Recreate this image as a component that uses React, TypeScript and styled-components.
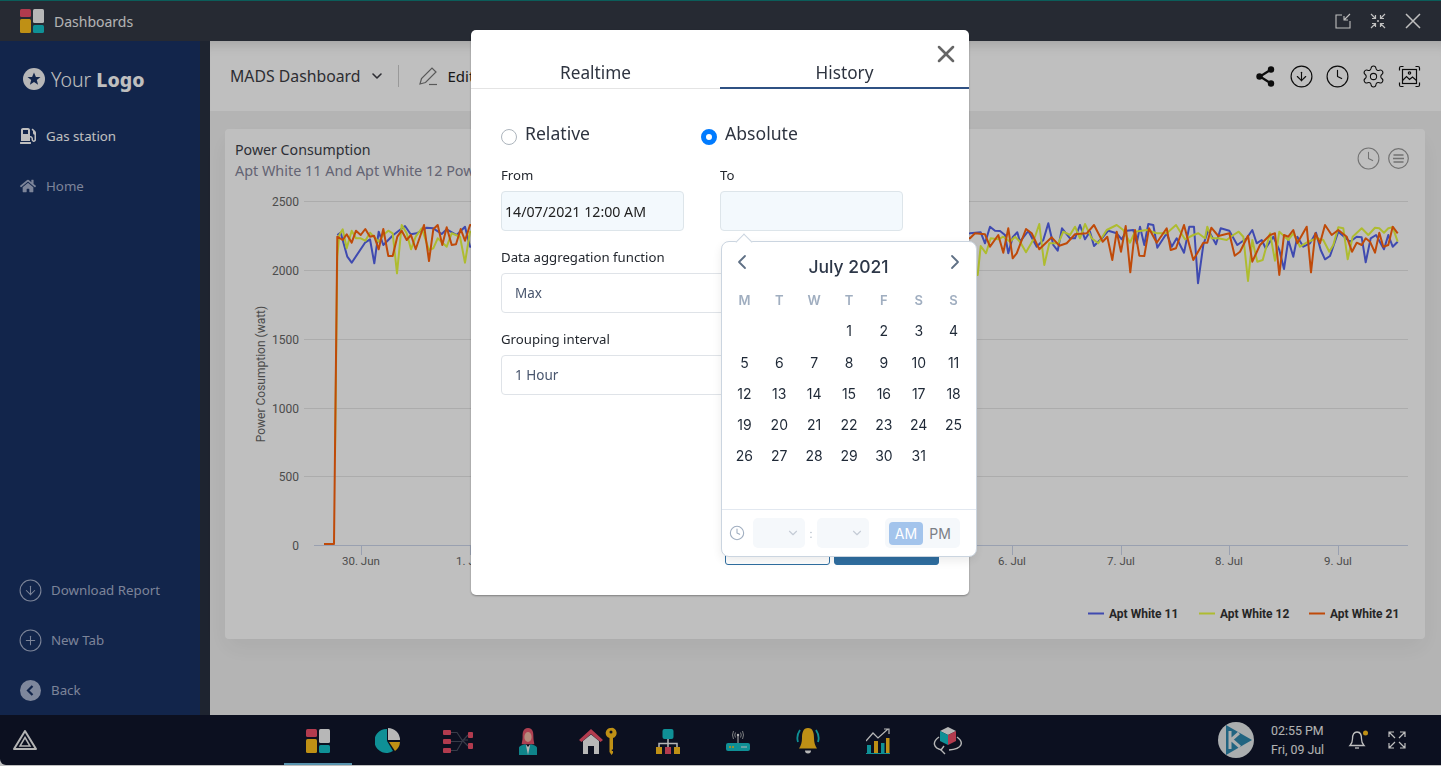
import React from 'react';
import styled, { createGlobalStyle } from 'styled-components';
import { ChevronDown, ChevronLeft, ChevronRight, CircleArrowDown, CirclePlus, Clock, Settings, X } from 'lucide-react';
import { FaGasPump, FaHome } from 'react-icons/fa';

const GlobalStyle = createGlobalStyle`
	html, body { margin: 0; padding: 0; background: #fff; }
	body { font-family: "Noto Sans", "Open Sans", sans-serif; overflow: hidden; }
	* { box-sizing: border-box; }
`;

const Shell = styled.div`
	height: 765px;
	display: flex;
	flex-direction: column;
	overflow: hidden;
`;
const TitleBar = styled.header`
	height: 41px;
	flex: none;
	display: flex;
	align-items: center;
	padding: 0 20px 0 20px;
	background: #333844;
	border-top: 1px solid #0f7d78;
	position: relative;
	z-index: 2;
`;
const TitleText = styled.span`
	margin-left: 10px;
	font-size: 14px;
	color: #fff;
	opacity: 0.92;
`;
const TitleActions = styled.div`
	margin-left: auto;
	display: flex;
	align-items: center;
	gap: 19px;
	color: #fff;
`;
const Middle = styled.div`
	flex: 1;
	display: flex;
	min-height: 0;
`;
const Sidebar = styled.aside`
	width: 210px;
	flex: none;
	display: flex;
	flex-direction: column;
	background: #193264;
	border-right: 10px solid #293040;
	padding: 0 0 15px 20px;
`;
const Logo = styled.div`
	display: flex;
	align-items: center;
	gap: 6px;
	margin: 27px 0 0 3px;
	height: 22px;
	font-size: 19.5px;
	color: #fff;
	font-weight: 300;
	b { font-weight: 800; }
`;
const NavItem = styled.div<{ $dim?: boolean; $wide?: boolean }>`
	display: flex;
	align-items: center;
	height: 20px;
	gap: 10px;
	font-size: 13.3px;
	color: ${(p) => (p.$dim ? '#a6b1cc' : '#ffffff')};
	svg { flex: none; }
	${(p) => p.$wide && 'svg { margin-left: -2px; margin-right: -2px; } gap: 10px;'}
`;
const TopNav = styled.nav`
	display: flex;
	flex-direction: column;
	gap: 30px;
	margin-top: 36px;
`;
const BottomNav = styled.nav`
	margin-top: auto;
	display: flex;
	flex-direction: column;
	gap: 30px;
`;
const Content = styled.main`
	flex: 1;
	min-width: 0;
	background: #f1f1f1;
	display: flex;
	flex-direction: column;
`;
const Toolbar = styled.div`
	height: 70px;
	flex: none;
	display: flex;
	align-items: center;
	background: #fff;
	padding: 0 19px 0 20px;
	box-shadow: inset 0 14px 12px -10px rgba(0, 0, 0, 0.14);
`;
const DashName = styled.span`
	font-size: 15.8px;
	color: #3c3c44;
	display: flex;
	align-items: center;
	gap: 8px;
`;
const Divider = styled.span`
	width: 1px;
	height: 22px;
	background: #ccc;
	margin: 0 20px 0 13px;
`;
const EditLabel = styled.span`
	margin-left: 9px;
	font-size: 15px;
	color: #222;
`;
const ToolActions = styled.div`
	margin-left: auto;
	display: flex;
	align-items: center;
	gap: 11px;
	color: #111;
`;
const Card = styled.section`
	margin: 18px 16px 0 15px;
	height: 510px;
	background: #fff;
	border-radius: 4px;
	box-shadow: 0 10px 24px rgba(0, 0, 0, 0.05);
`;
const CardHead = styled.div`
	display: flex;
	justify-content: space-between;
	padding: 11px 14px 0 10px;
	height: 61px;
`;
const CardTitle = styled.h2`
	margin: 0;
	font-size: 14.2px;
	line-height: 20px;
	font-weight: 400;
	color: #3d3f4a;
`;
const CardSub = styled.p`
	margin: 1px 0 0;
	font-size: 14.4px;
	line-height: 20px;
	color: #85859a;
`;
const CardActions = styled.div`
	display: flex;
	gap: 5px;
	color: #999;
	padding-top: 6px;
`;
const ChartSvg = styled.svg`
	display: block;
	width: 1200px;
	height: 440px;
	font-family: Roboto, "Liberation Sans", sans-serif;
`;
const Dock = styled.footer`
	height: 50px;
	flex: none;
	display: flex;
	align-items: center;
	background: #10162b;
	border-bottom-left-radius: 6px;
	padding: 0 35px 0 13px;
	position: relative;
`;
const DockApps = styled.div`
	position: absolute;
	left: 283px;
	top: 0;
	height: 50px;
	display: flex;
`;
const DockApp = styled.div<{ $active?: boolean }>`
	width: 70px;
	height: 50px;
	display: flex;
	align-items: center;
	justify-content: center;
	padding-top: 2px;
	position: relative;
	&::after {
		content: '';
		position: absolute;
		left: 1px;
		right: 1px;
		bottom: 0;
		height: 2px;
		background: ${(p) => (p.$active ? '#76c4e8' : 'transparent')};
	}
`;
const DockRight = styled.div`
	margin-left: auto;
	display: flex;
	align-items: center;
	color: #fff;
`;
const DockTime = styled.div`
	margin: 0 18px 0 17px;
	font-size: 12.4px;
	line-height: 19px;
	color: #eee;
	font-family: Roboto, sans-serif;
	width: 58px;
`;
const DockGap = styled.span`
	width: 19px;
`;
const Overlay = styled.div`
	position: fixed;
	inset: 0;
	z-index: 5;
	background: rgba(0, 0, 0, 0.25);
	display: flex;
	justify-content: center;
	padding: 30px 1px 0 0;
`;
const Modal = styled.div`
	width: 498px;
	height: 565px;
	background: #fff;
	border-radius: 5px;
	position: relative;
	display: flex;
	flex-direction: column;
	box-shadow: 0 1px 2px rgba(0, 0, 0, 0.35);
`;
const CloseButton = styled.span`
	position: absolute;
	top: 10px;
	right: 9px;
	color: #666;
	display: flex;
`;
const Tabs = styled.div`
	display: flex;
	height: 59px;
	flex: none;
`;
const Tab = styled.div<{ $active?: boolean }>`
	width: 50%;
	padding-top: 31px;
	text-align: center;
	font-size: 17.2px;
	line-height: 24px;
	color: #2e3440;
	border-bottom: ${(p) => (p.$active ? '2px solid #2f5183' : '1px solid #e4e4e4')};
	height: 59px;
`;
const Form = styled.div`
	flex: 1;
	display: flex;
	flex-direction: column;
	padding: 32px 30px 30px;
`;
const RadioRow = styled.div`
	display: flex;
	height: 24px;
	margin-bottom: 21px;
`;
const RadioOption = styled.label`
	width: 200px;
	display: flex;
	gap: 8px;
	font-size: 17.6px;
	line-height: 24px;
	color: #2e3440;
`;
const RadioDot = styled.span<{ $on?: boolean }>`
	width: 16px;
	height: 16px;
	margin-top: 8px;
	border-radius: 50%;
	background: #fff;
	border: ${(p) => (p.$on ? '5px solid #007bff' : '1px solid #adb5bd')};
`;
const Row = styled.div`
	display: flex;
	gap: 36px;
`;
const Field = styled.div<{ $narrow?: boolean }>`
	width: ${(p) => (p.$narrow ? '183px' : '100%')};
	margin-bottom: 17px;
`;
const FieldLabel = styled.div`
	font-size: 13.2px;
	line-height: 18px;
	margin-bottom: 7px;
	color: #23272e;
`;
const DateInput = styled.div`
	height: 40px;
	background: #f3f9fd;
	border: 1px solid #dde5ea;
	border-radius: 4px;
	display: flex;
	align-items: center;
	padding-left: 3px;
	font-size: 14.2px;
	color: #222;
`;
const SelectBox = styled.div`
	height: 40px;
	background: #fff;
	border: 1px solid #dfe3e8;
	border-radius: 4px;
	display: flex;
	align-items: center;
	padding-left: 13px;
	font-size: 13.5px;
	color: #49566e;
`;
const ButtonRow = styled.div`
	margin-top: auto;
	display: flex;
	justify-content: flex-end;
	gap: 4px;
`;
const ActionButton = styled.div<{ $solid?: boolean }>`
	width: 105px;
	height: 35px;
	border-radius: 3px;
	border: 1px solid #2f6ea0;
	background: ${(p) => (p.$solid ? '#2f6ea0' : '#fff')};
`;
const Calendar = styled.div`
	position: absolute;
	left: 250px;
	top: 211px;
	width: 256px;
	height: 316px;
	background: #fff;
	border: 1px solid #cbd5e0;
	border-radius: 8px;
	box-shadow: 0 4px 10px rgba(0, 0, 0, 0.08);
	display: flex;
	flex-direction: column;
	font-family: Inter, sans-serif;
	&::before {
		content: '';
		position: absolute;
		top: -6px;
		left: 16px;
		width: 11px;
		height: 11px;
		background: #fff;
		border-top: 1px solid #cbd5e0;
		border-left: 1px solid #cbd5e0;
		transform: rotate(45deg);
	}
`;
const CalHead = styled.div`
	height: 42px;
	flex: none;
	display: flex;
	align-items: center;
	justify-content: space-between;
	padding: 6px 9px 0 8px;
	font-size: 17.5px;
	font-weight: 500;
	color: #2d3748;
	svg { color: #5f7085; margin-top: -8px; }
`;
const DayGrid = styled.div`
	display: grid;
	grid-template-columns: repeat(7, 34.86px);
	grid-auto-rows: 31.25px;
	padding-left: 5px;
`;
const WeekDay = styled.span`
	display: flex;
	align-items: center;
	justify-content: center;
	font-size: 13px;
	font-weight: 600;
	color: #a0aec0;
`;
const Day = styled.span`
	display: flex;
	align-items: center;
	justify-content: center;
	font-size: 14px;
	color: #1f2937;
`;
const CalFoot = styled.div`
	margin-top: auto;
	height: 47px;
	border-top: 1px solid #e2e8f0;
	display: flex;
	align-items: center;
	gap: 8px;
	padding-left: 7px;
	color: #a0aec0;
`;
const TimeFields = styled.div`
	display: flex;
	align-items: center;
`;
const TimeSelect = styled.span`
	width: 52px;
	height: 30px;
	border-radius: 5px;
	background: #f5f8fb;
	display: flex;
	align-items: center;
	justify-content: flex-end;
	padding-right: 5px;
	color: #c5ccd6;
`;
const Colon = styled.span`
	width: 12px;
	text-align: center;
	font-size: 12px;
	color: #b8c0cc;
`;
const AmPm = styled.div`
	margin-left: 8px;
	width: 75px;
	height: 30px;
	border-radius: 5px;
	background: #f5f8fb;
	display: flex;
	align-items: center;
	padding-left: 4px;
	font-size: 14px;
`;
const Meridiem = styled.span<{ $on?: boolean }>`
	width: 34px;
	height: 23px;
	border-radius: 4px;
	display: flex;
	align-items: center;
	justify-content: center;
	background: ${(p) => (p.$on ? '#a3c4ec' : 'transparent')};
	color: ${(p) => (p.$on ? '#fff' : '#7b7f86')};
`;

// traced from the screenshot, zoomed coordinates, left and right of the modal
const traces = {
	blue: {
		left: '352,135 362,128 382,200 395,218 435,158 450,148 463,220 476,125 490,165 520,135 555,108 572,133 590,130 620,113 640,115 665,132 680,118 710,135 735,110 750,170',
		right: '30,100 62,97 75,130 90,80 105,92 120,93 135,105 145,160 158,112 172,97 180,125 205,93 230,140 250,120 265,70 280,135 293,152 306,85 330,115 345,115 360,75 375,118 390,95 402,138 430,110 445,92 470,100 485,118 500,92 520,90 530,130 540,80 553,135 565,72 580,75 592,143 620,100 635,140 650,115 672,158 688,80 702,80 714,250 730,135 745,90 768,133 782,85 808,92 832,135 860,115 877,90 890,130 905,120 917,145 940,110 958,150 972,207 985,120 1000,170 1012,110 1030,140 1050,130 1068,98 1082,150 1095,178 1110,168 1135,95 1170,125 1190,110 1205,112 1217,187 1232,115 1248,105 1272,148 1285,105 1298,140 1313,125',
		color: '#5463eb',
	},
	green: {
		left: '345,800 352,200 358,135 368,118 380,175 395,122 408,145 422,145 436,152 450,128 476,155 490,135 505,122 518,130 531,250 545,105 560,130 573,178 587,140 605,115 627,180 640,175 653,145 680,170 695,130 720,140 735,218 750,125',
		right: '53,225 62,138 78,160 92,115 115,118 130,110 150,125 165,110 180,125 198,157 225,110 238,72 253,195 268,130 295,130 310,95 330,105 345,80 360,115 375,72 395,115 415,130 440,90 470,75 490,90 510,128 525,95 560,90 590,100 620,100 648,75 675,118 700,105 715,100 735,115 742,80 755,115 775,115 800,120 820,105 836,95 850,110 864,243 877,120 892,185 908,180 930,100 945,182 958,95 985,120 1000,100 1020,140 1045,125 1070,115 1090,120 1108,155 1120,135 1135,82 1150,85 1163,178 1178,110 1205,85 1225,105 1245,83 1258,85 1272,98 1285,85 1298,82 1313,125',
		color: '#e9fb40',
	},
	orange: {
		left: '312,1062 342,1062 352,140 368,150 380,133 395,158 408,122 422,135 436,117 450,140 462,137 476,178 490,117 505,198 518,198 532,140 545,122 560,150 573,135 587,178 612,105 627,213 640,118 653,105 667,165 680,112 695,165 708,163 722,117 735,152 750,105',
		right: '30,115 45,100 75,103 90,140 115,105 130,158 145,85 158,175 170,160 198,87 215,100 238,148 275,112 298,137 320,130 345,103 380,100 402,75 428,125 442,110 457,180 470,95 483,155 497,78 511,217 525,90 538,167 553,168 567,85 590,128 620,85 632,150 648,145 672,75 700,180 730,128 742,128 754,83 775,108 808,100 824,167 840,155 864,107 877,185 900,135 930,105 945,100 958,225 972,105 985,110 1000,90 1012,130 1040,80 1053,217 1066,100 1080,130 1095,75 1115,105 1135,90 1160,110 1176,155 1190,128 1205,135 1217,115 1230,125 1245,158 1258,98 1270,140 1285,135 1298,80 1313,100',
		color: '#ff630c',
	},
};

const toPage = (pts: string, ox: number, oy: number) =>
	pts
		.split(' ')
		.map((p) => {
			const [x, y] = p.split(',').map(Number);
			return `${(ox + x / 3).toFixed(1)},${(oy + y / 3).toFixed(1)}`;
		})
		.join(' ');

const yTicks = [
	[2500, 201],
	[2000, 270],
	[1500, 339],
	[1000, 408],
	[500, 476],
];
const xTicks: [string, number][] = [
	['30. Jun', 361],
	['1. Jul', 470],
	['6. Jul', 1012],
	['7. Jul', 1121],
	['8. Jul', 1229],
	['9. Jul', 1338],
];
const legend: [string, string, number][] = [
	['Apt White 11', traces.blue.color, 1088],
	['Apt White 12', traces.green.color, 1199],
	['Apt White 21', traces.orange.color, 1309],
];

const PowerChart = () => (
	<ChartSvg viewBox="225 190 1200 440">
		{yTicks.map(([v, y]) => (
			<g key={v}>
				<line x1={304} x2={1408} y1={y + 0.5} y2={y + 0.5} stroke="#e6e6e6" />
				<text x={299} y={y + 5} textAnchor="end" fontSize={12} fill="#666">
					{v}
				</text>
			</g>
		))}
		<text x={299} y={550} textAnchor="end" fontSize={12} fill="#666">
			0
		</text>
		<line x1={314} x2={1408} y1={545.5} y2={545.5} stroke="#ccd6eb" />
		{xTicks.map(([label, x]) => (
			<g key={label}>
				<line x1={x + 0.5} x2={x + 0.5} y1={545} y2={555} stroke="#ccd6eb" />
				<text x={x} y={565} textAnchor="middle" fontSize={11.5} fill="#666">
					{label}
				</text>
			</g>
		))}
		<text x={0} y={0} transform="translate(265 374) rotate(-90)" textAnchor="middle" fontSize={12} fill="#666">
			Power Cosumption (watt)
		</text>
		{Object.values(traces).map((t) => (
			<polyline
				key={t.color}
				points={`${toPage(t.left, 220, 190)} ${toPage(t.right, 960, 200)}`}
				fill="none"
				stroke={t.color}
				strokeWidth={2}
				strokeLinejoin="round"
			/>
		))}
		{legend.map(([label, color, x]) => (
			<g key={label}>
				<line x1={x} x2={x + 16} y1={613.5} y2={613.5} stroke={color} strokeWidth={2} />
				<text x={x + 21} y={618} fontSize={12} fontWeight={700} fill="#333">
					{label}
				</text>
			</g>
		))}
	</ChartSvg>
);

const TilesIcon = () => (
	<svg width="24" height="24" viewBox="0 0 24 24">
		<rect x="0" y="0" width="11" height="8" rx="1.5" fill="#ee4f69" />
		<rect x="0" y="10" width="11" height="14" rx="1.5" fill="#ffc11c" />
		<rect x="13" y="0" width="11" height="14" rx="1.5" fill="#f4f4f4" />
		<rect x="13" y="16" width="11" height="8" rx="1.5" fill="#14c0c8" />
	</svg>
);
const PieIcon = () => (
	<svg width="26" height="26" viewBox="0 0 26 26">
		<path d="M12 1A12 12 0 1 0 18 23L12 13Z" fill="#14c0c8" />
		<path d="M13 0A12 12 0 0 1 25 12H13Z" fill="#f4f4f4" />
		<path d="M14 14H25A12 12 0 0 1 20 23Z" fill="#ffc11c" />
	</svg>
);
const FlowIcon = () => (
	<svg width="30" height="24" viewBox="0 0 30 24">
		<g fill="#ee4f69">
			<rect x="0" y="1" width="8" height="5" rx="1" />
			<rect x="0" y="10" width="8" height="5" rx="1" />
			<rect x="0" y="19" width="8" height="5" rx="1" />
			<rect x="25" y="3" width="5" height="6" rx="1" />
			<rect x="25" y="14" width="5" height="6" rx="1" />
		</g>
		<path d="M8 3.500H14L19 11H25M8 12.500H19L25 6M8 21.500H14L19 13M19 11L25 17" fill="none" stroke="#4b4f60" strokeWidth="1.200" />
	</svg>
);
const PersonIcon = () => (
	<svg width="20" height="27" viewBox="0 0 20 30">
		<path d="M10 0C4 0 4 6 4 10C4 14 3 16 3 18H17C17 16 16 14 16 10C16 6 16 0 10 0Z" fill="#e8566c" />
		<ellipse cx="10" cy="10" rx="4" ry="5.500" fill="#f3b9a6" />
		<path d="M0 30V22C0 20 3 19 7 18L10 22L13 18C17 19 20 20 20 22V30Z" fill="#14b0b8" />
		<path d="M7.500 18L10 30L12.500 18L10 21Z" fill="#f4f4f4" />
	</svg>
);
const HomeKeyIcon = () => (
	<svg width="38" height="28" viewBox="0 0 38 28">
		<path d="M0 13L12 2L24 13L21.500 15L12 7L2.500 15Z" fill="#ee4f69" />
		<path d="M4 14L12 7.500L20 14V27H15V19H9V27H4Z" fill="#f4f4f4" />
		<path d="M32 1A4.500 5 0 0 0 30.500 11V25L32.500 28L34 26V24H32.800V22.500H34V11A4.500 5 0 0 0 32 1ZM32 3.500A1.500 1.500 0 1 1 32 6.500A1.500 1.500 0 1 1 32 3.500Z" fill="#ffc11c" fillRule="evenodd" />
	</svg>
);
const OrgIcon = () => (
	<svg width="24" height="25" viewBox="0 0 24 25">
		<rect x="6.500" y="0" width="11" height="10" rx="2" fill="#14c0c8" />
		<path d="M12 10V14M3 18V14.500H21V18M12 14.500V18" stroke="#f4f4f4" strokeWidth="1.500" fill="none" />
		<rect x="0" y="18" width="6" height="7" fill="#ffc11c" />
		<rect x="9" y="18" width="6" height="7" fill="#ee4f69" />
		<rect x="18" y="18" width="6" height="7" fill="#ffc11c" />
	</svg>
);
const RouterIcon = () => (
	<svg width="24" height="22" viewBox="0 0 24 22">
		<rect x="0" y="13" width="24" height="8" rx="2" fill="#14c0c8" />
		<path d="M12 13V6" stroke="#f4f4f4" />
		<circle cx="12" cy="5" r="1.200" fill="#f4f4f4" />
		<path d="M9.500 2.500Q8 5 9.500 7.500M14.500 2.500Q16 5 14.500 7.500M7.500 1Q5.500 5 7.500 9M16.500 1Q18.500 5 16.500 9" stroke="#ccc" fill="none" strokeWidth="0.800" />
		<circle cx="4" cy="17" r="1" fill="#ffc11c" />
		<circle cx="7" cy="17" r="1" fill="#ffc11c" />
		<rect x="15" y="16.500" width="6" height="1" fill="#f4f4f4" />
	</svg>
);
const BellColorIcon = () => (
	<svg width="24" height="28" viewBox="0 0 24 28">
		<path d="M12 1C7 1 6 6 6 11C6 15 5 19 3 21.500H21C19 19 18 15 18 11C18 6 17 1 12 1Z" fill="#ffc11c" />
		<path d="M9 23.500A3 3 0 0 0 15 23.500Z" fill="#f4f4f4" />
		<path d="M4 3Q0 9 2 15M20 3Q24 9 22 15" stroke="#14c0c8" strokeWidth="1.800" fill="none" />
	</svg>
);
const GrowthIcon = () => (
	<svg width="24" height="26" viewBox="0 0 24 26">
		<rect x="1" y="17" width="4" height="8" fill="#14c0c8" />
		<rect x="8" y="13" width="4" height="12" fill="#ffc11c" />
		<rect x="15" y="15" width="3.500" height="10" fill="#14c0c8" />
		<rect x="20" y="10" width="3.500" height="15" fill="#ffc11c" />
		<path d="M0 25.500H24" stroke="#14c0c8" />
		<path d="M0 13L7 5L12 10L22 1M18 1H23V6" stroke="#f4f4f4" strokeWidth="1.200" fill="none" />
	</svg>
);
const CubeIcon = () => (
	<svg width="30" height="28" viewBox="0 0 30 28">
		<path d="M15 0L23 4L15 8L7 4Z" fill="#f4f4f4" />
		<path d="M7 4L15 8V18L7 14Z" fill="#14c0c8" />
		<path d="M23 4L15 8V18L23 14Z" fill="#ee4f69" />
		<path d="M6 10C-1 15 0 21 9 23M24 10C31 15 30 22 16 23" stroke="#f4f4f4" strokeWidth="1.400" fill="none" />
		<path d="M11 19L8 23L12 27" stroke="#f4f4f4" strokeWidth="1.400" fill="none" />
	</svg>
);
const DeltaIcon = () => (
	<svg width="24" height="20" viewBox="0 0 24 20">
		<path d="M12 1L23 19H1Z" fill="none" stroke="#f0f0f0" strokeWidth="2" strokeLinejoin="round" />
		<path d="M12 7.500L17 16H7Z" fill="none" stroke="#f0f0f0" strokeWidth="1.500" />
	</svg>
);
const BrandAvatar = () => (
	<svg width="36" height="36" viewBox="0 0 36 36">
		<circle cx="18" cy="18" r="18" fill="#e4e8ea" />
		<path d="M8 3L34 18L8 33Z" fill="#2c86ad" />
		<path d="M12 9V27M13 18L21 11M14 18L22 25" stroke="#e4e8ea" strokeWidth="3" fill="none" />
	</svg>
);
const ShareIcon = () => (
	<svg width="25" height="25" viewBox="0 0 25 25">
		<path d="M18 5.500L7 12.500L18 19.500" stroke="currentColor" strokeWidth="2.200" fill="none" />
		<circle cx="18" cy="5.500" r="3.200" fill="currentColor" />
		<circle cx="6.500" cy="12.500" r="3.200" fill="currentColor" />
		<circle cx="18" cy="19.500" r="3.200" fill="currentColor" />
	</svg>
);
const PhotoFrameIcon = () => (
	<svg width="25" height="25" viewBox="-1.500 -1.500 25 25" fill="none" stroke="currentColor" strokeWidth="1.200">
		<path d="M1 5V2.500Q1 1 2.500 1H5M17 1H19.500Q21 1 21 2.500V5M21 17V19.500Q21 21 19.500 21H17M5 21H2.500Q1 21 1 19.500V17" />
		<rect x="4" y="4" width="14" height="14" />
		<circle cx="11" cy="7.500" r="1.200" />
		<path d="M4 15L8 11L11 14L14 11.500L18 15" />
	</svg>
);
const PopOutIcon = () => (
	<svg width="16" height="16" viewBox="0 0 16 16" fill="none" stroke="currentColor" strokeWidth="1.100">
		<path d="M7 2H1V15H15V8" />
		<path d="M15 1L9 7M9 3V7H13" />
	</svg>
);
const CollapseIcon = () => (
	<svg width="16" height="16" viewBox="0 0 16 16" fill="none" stroke="currentColor" strokeWidth="1.200">
		<path d="M1 1L5.500 5.500M5.500 2V5.500H2M15 1L10.500 5.500M10.500 2V5.500H14M1 15L5.500 10.500M5.500 14V10.500H2M15 15L10.500 10.500M10.500 14V10.500H14" />
		<circle cx="8" cy="8" r="1" fill="currentColor" stroke="none" />
	</svg>
);
const CloseGlyph = () => (
	<svg width="16" height="16" viewBox="0 0 16 16" fill="none" stroke="currentColor" strokeWidth="1.500">
		<path d="M1 1L15 15M15 1L1 15" />
	</svg>
);
const ExpandIcon = () => (
	<svg width="18" height="18" viewBox="0 0 18 18" fill="none" stroke="currentColor" strokeWidth="1.200">
		<path d="M1 6V1H6M1 1L7 7M17 6V1H12M17 1L11 7M1 12V17H6M1 17L7 11M17 12V17H12M17 17L11 11" />
	</svg>
);
const BellOutline = () => (
	<svg width="22" height="22" viewBox="0 0 22 22" fill="none" stroke="currentColor" strokeWidth="1.300">
		<path d="M10 3C6 3 5.500 6 5.500 10C5.500 13 4.500 15 3 16.500H17C15.500 15 14.500 13 14.500 10C14.500 6 14 3 10 3Z" />
		<path d="M8 19H12" />
		<circle cx="18.500" cy="4" r="2.500" fill="#ffc11c" stroke="none" />
	</svg>
);
const PenIcon = () => (
	<svg width="20" height="20" viewBox="0 0 20 20" fill="none" stroke="#777" strokeWidth="1.200">
		<path d="M1 18L2.500 12.500L13 2L17 6L6.500 16.500Z" />
		<path d="M10 18.500H18" />
	</svg>
);
const ListCircle = () => (
	<svg width="25" height="25" viewBox="-2 -2 25 25" fill="none" stroke="currentColor" strokeWidth="1.200">
		<circle cx="10.500" cy="10.500" r="9.800" />
		<path d="M5.500 7H15.500M5 10.500H16M5.500 14H15.500" strokeWidth="1.500" />
	</svg>
);
const BackCircle = () => (
	<svg width="25" height="25" viewBox="-2 -2 25 25">
		<circle cx="10.500" cy="10.500" r="10.500" fill="#a9b4d0" />
		<path d="M12.500 6L8 10.500L12.500 15" stroke="#193264" strokeWidth="2.200" fill="none" />
	</svg>
);
const StarBadge = () => (
	<svg width="22" height="22" viewBox="0 0 22 22">
		<circle cx="11" cy="11" r="11" fill="#f4f4f4" />
		<path d="M11 4.500L12.900 9H17.500L13.800 12L15.100 16.800L11 14L6.900 16.800L8.200 12L4.500 9H9.100Z" fill="#193264" />
	</svg>
);

const dockApps = [
	<TilesIcon />,
	<PieIcon />,
	<FlowIcon />,
	<PersonIcon />,
	<HomeKeyIcon />,
	<OrgIcon />,
	<RouterIcon />,
	<BellColorIcon />,
	<GrowthIcon />,
	<CubeIcon />,
];
const weekDays = ['M', 'T', 'W', 'T', 'F', 'S', 'S'];
const days = [...Array(3).fill(''), ...Array.from({ length: 31 }, (_, i) => i + 1)];

export default function App() {
	return (
		<Shell>
			<GlobalStyle />
			<TitleBar>
				<TilesIcon />
				<TitleText>Dashboards</TitleText>
				<TitleActions>
					<PopOutIcon />
					<CollapseIcon />
					<CloseGlyph />
				</TitleActions>
			</TitleBar>
			<Middle>
				<Sidebar>
					<Logo>
						<StarBadge />
						<span>
							Your <b>Logo</b>
						</span>
					</Logo>
					<TopNav>
						<NavItem>
							<FaGasPump size={16} />
							Gas station
						</NavItem>
						<NavItem $dim>
							<FaHome size={16} />
							Home
						</NavItem>
					</TopNav>
					<BottomNav>
						<NavItem $dim $wide>
							<CircleArrowDown size={25} strokeWidth={1} />
							Download Report
						</NavItem>
						<NavItem $dim $wide>
							<CirclePlus size={25} strokeWidth={1} />
							New Tab
						</NavItem>
						<NavItem $dim $wide>
							<BackCircle />
							Back
						</NavItem>
					</BottomNav>
				</Sidebar>
				<Content>
					<Toolbar>
						<DashName>
							MADS Dashboard
							<ChevronDown size={16} strokeWidth={2.4} />
						</DashName>
						<Divider />
						<PenIcon />
						<EditLabel>Edit</EditLabel>
						<ToolActions>
							<ShareIcon />
							<CircleArrowDown size={25} strokeWidth={1.1} />
							<Clock size={25} strokeWidth={1.1} />
							<Settings size={25} strokeWidth={1} />
							<PhotoFrameIcon />
						</ToolActions>
					</Toolbar>
					<Card>
						<CardHead>
							<div>
								<CardTitle>Power Consumption</CardTitle>
								<CardSub>Apt White 11 And Apt White 12 Power</CardSub>
							</div>
							<CardActions>
								<Clock size={25} strokeWidth={1} />
								<ListCircle />
							</CardActions>
						</CardHead>
						<PowerChart />
					</Card>
				</Content>
			</Middle>
			<Dock>
				<DeltaIcon />
				<DockApps>
					{dockApps.map((icon, i) => (
						<DockApp key={i} $active={i === 0}>
							{icon}
						</DockApp>
					))}
				</DockApps>
				<DockRight>
					<BrandAvatar />
					<DockTime>
						02:55 PM
						<br />
						Fri, 09 Jul
					</DockTime>
					<BellOutline />
					<DockGap />
					<ExpandIcon />
				</DockRight>
			</Dock>
			<Overlay>
				<Modal>
					<CloseButton>
						<X size={28} strokeWidth={2.2} />
					</CloseButton>
					<Tabs>
						<Tab>Realtime</Tab>
						<Tab $active>History</Tab>
					</Tabs>
					<Form>
						<RadioRow>
							<RadioOption>
								<RadioDot />
								Relative
							</RadioOption>
							<RadioOption>
								<RadioDot $on />
								Absolute
							</RadioOption>
						</RadioRow>
						<Row>
							<Field $narrow>
								<FieldLabel>From</FieldLabel>
								<DateInput>14/07/2021 12:00 AM</DateInput>
							</Field>
							<Field $narrow>
								<FieldLabel>To</FieldLabel>
								<DateInput />
							</Field>
						</Row>
						<Field>
							<FieldLabel>Data aggregation function</FieldLabel>
							<SelectBox>Max</SelectBox>
						</Field>
						<Field>
							<FieldLabel>Grouping interval</FieldLabel>
							<SelectBox>1 Hour</SelectBox>
						</Field>
						<ButtonRow>
							<ActionButton />
							<ActionButton $solid />
						</ButtonRow>
					</Form>
					<Calendar>
						<CalHead>
							<ChevronLeft size={24} strokeWidth={1.8} />
							July 2021
							<ChevronRight size={24} strokeWidth={1.8} />
						</CalHead>
						<DayGrid>
							{weekDays.map((d, i) => (
								<WeekDay key={i}>{d}</WeekDay>
							))}
							{days.map((d, i) => (
								<Day key={i}>{d}</Day>
							))}
						</DayGrid>
						<CalFoot>
							<Clock size={16} strokeWidth={1.6} />
							<TimeFields>
								<TimeSelect>
									<ChevronDown size={14} />
								</TimeSelect>
								<Colon>:</Colon>
								<TimeSelect>
									<ChevronDown size={14} />
								</TimeSelect>
							</TimeFields>
							<AmPm>
								<Meridiem $on>AM</Meridiem>
								<Meridiem>PM</Meridiem>
							</AmPm>
						</CalFoot>
					</Calendar>
				</Modal>
			</Overlay>
		</Shell>
	);
}
